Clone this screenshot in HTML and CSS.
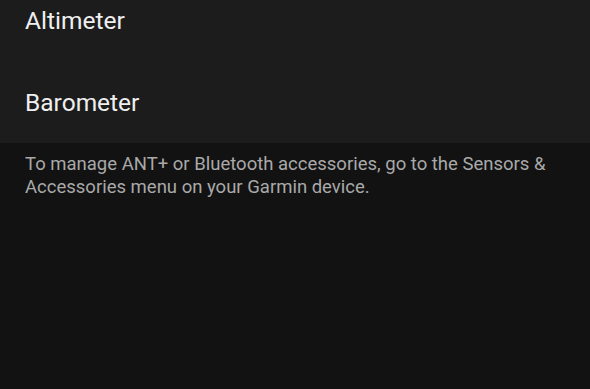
FILE: index.html
```html
<!DOCTYPE html>
<html>
<head>
<meta charset="utf-8">
<link rel="stylesheet" href="styles.css">
</head>
<body>
<div class="screen">
  <ul class="list">
    <li class="item">Altimeter</li>
    <li class="item">Barometer</li>
  </ul>
  <p class="note">To manage ANT+ or Bluetooth accessories, go to the Sensors &amp; Accessories menu on your Garmin device.</p>
</div>
</body>
</html>
```
FILE: styles.css
```css
html, body {
  margin: 0;
  padding: 0;
  background: #121212;
}
.screen {
  width: 590px;
  height: 389px;
  overflow: hidden;
  background: #121212;
  font-family: Roboto, "Noto Sans", sans-serif;
}
.list {
  list-style: none;
  margin: -21px 0 0 0;
  padding: 0;
  background: #1c1c1c;
}
.item {
  height: 82px;
  display: flex;
  align-items: center;
  padding: 0 25px;
  font-size: 24.5px;
  color: #efefef;
}
.note {
  margin: 0;
  padding: 10px 25px 0 25px;
  font-size: 18.5px;
  line-height: 23px;
  color: #a9a9a9;
}
```
